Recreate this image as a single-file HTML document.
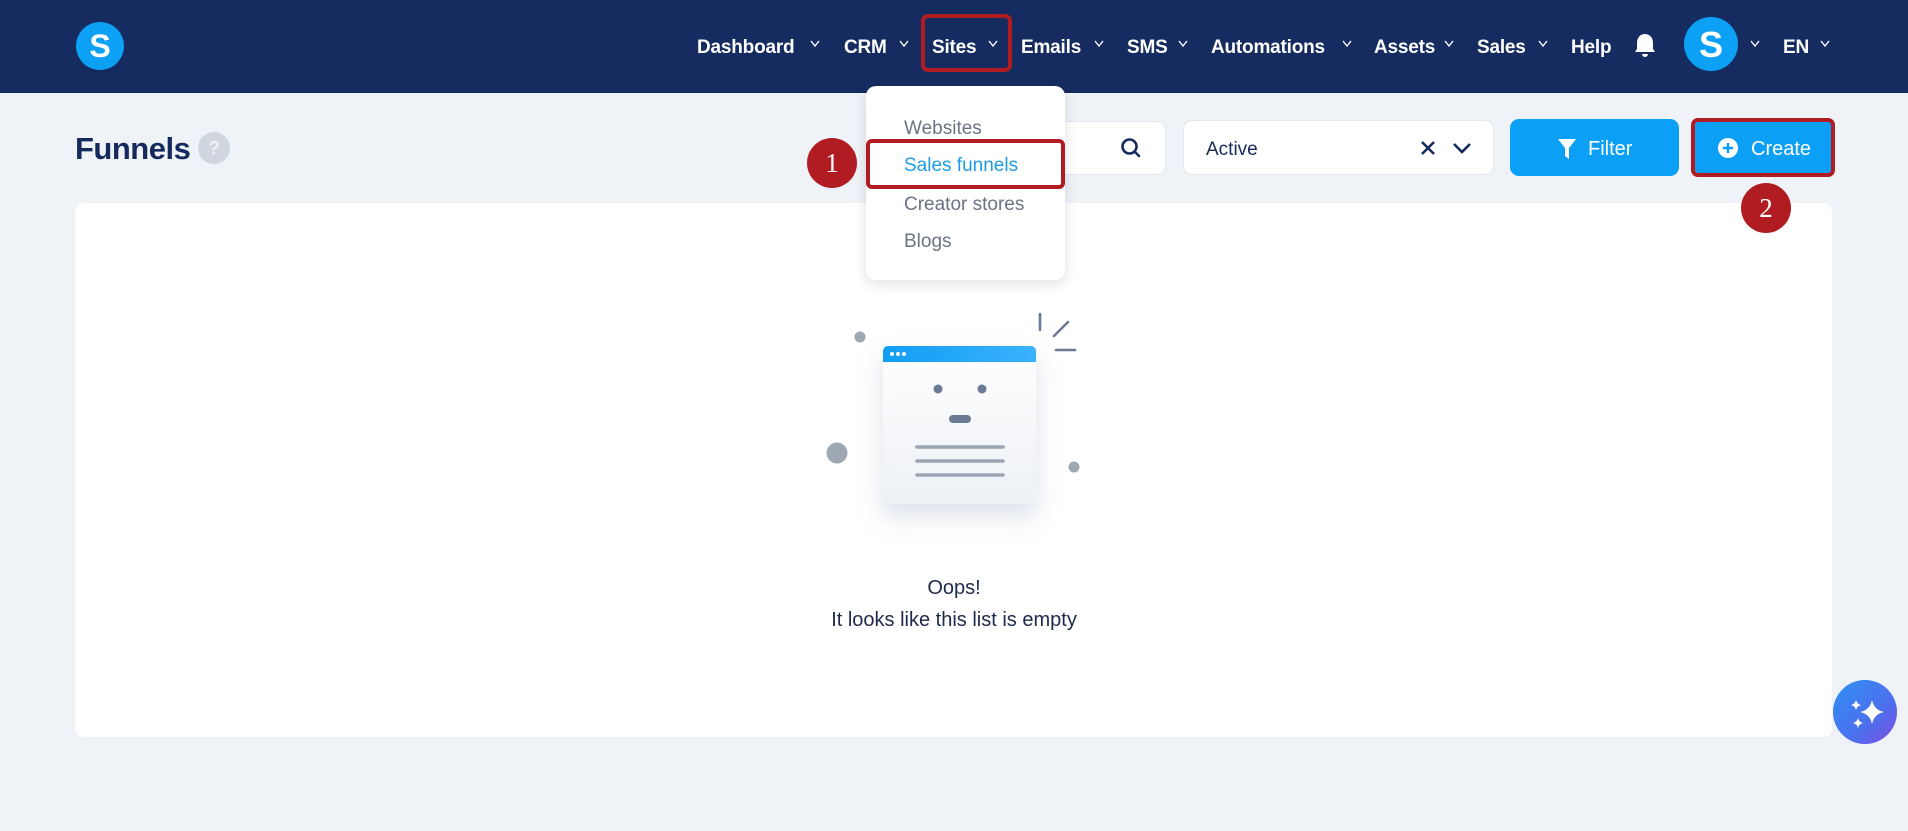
<!DOCTYPE html>
<html><head><meta charset="utf-8"><style>
*{margin:0;padding:0;box-sizing:border-box}
body{width:1908px;height:831px;background:#eff3f8;font-family:"Liberation Sans",sans-serif;position:relative;overflow:hidden}
.nav{position:absolute;left:0;top:0;width:1908px;height:93px;background:#162c60}
.ab{position:absolute}
.ni{position:absolute;top:36px;color:#fff;font-weight:bold;font-size:19px;line-height:24px;letter-spacing:-0.2px}
.dd{position:absolute;left:866px;top:86px;width:199px;height:194px;background:#fff;border-radius:10px;box-shadow:0 4px 14px rgba(0,0,0,.12)}
.di{position:absolute;left:904px;font-size:19px;color:#6b7384;line-height:24px}
.red{border:4px solid #b01c22;border-radius:6px}
.rc{position:absolute;width:50px;height:50px;border-radius:50%;background:#b01c22;color:#fff;font-family:"Liberation Serif",serif;font-size:27px;text-align:center;line-height:50px}
</style></head><body>
<div class="nav"></div>
<svg class="ab" style="left:76px;top:22px" width="48" height="48" viewBox="0 0 48 48"><circle cx="24" cy="24" r="24" fill="#0da1f5"/><text x="24" y="35" font-family="Liberation Sans" font-weight="bold" font-size="32" fill="#fff" text-anchor="middle">S</text></svg>

<div class="ni" style="left:697px">Dashboard</div>
<div class="ni" style="left:844px">CRM</div>
<div class="ab red" style="left:921px;top:14px;width:91px;height:58px;border-radius:7px"></div>
<div class="ni" style="left:932px">Sites</div>
<div class="ni" style="left:1021px">Emails</div>
<div class="ni" style="left:1127px">SMS</div>
<div class="ni" style="left:1211px">Automations</div>
<div class="ni" style="left:1374px">Assets</div>
<div class="ni" style="left:1477px">Sales</div>
<div class="ni" style="left:1571px">Help</div>
<div class="ni" style="left:1783px">EN</div>
<svg class="ab" style="left:0;top:0" width="1908" height="93">
<g fill="none" stroke="#fff" stroke-width="1.4">
<path d="M811 41l4 5 4-5"/><path d="M900 41l4 5 4-5"/><path d="M989 41l4 5 4-5"/><path d="M1095 41l4 5 4-5"/><path d="M1179 41l4 5 4-5"/><path d="M1343 41l4 5 4-5"/><path d="M1445 41l4 5 4-5"/><path d="M1539 41l4 5 4-5"/><path d="M1751 41l4 5 4-5"/><path d="M1821 41l4 5 4-5"/>
</g>
<path d="M1645 34c-5 0-8 4-8 9v6l-2 3h20l-2-3v-6c0-5-3-9-8-9zM1642 54a3 3 0 0 0 6 0z" fill="#fff"/>
<circle cx="1711" cy="44" r="27" fill="#0da1f5"/>
<text x="1711" y="57" font-family="Liberation Sans" font-weight="bold" font-size="36" fill="#fff" text-anchor="middle">S</text>
</svg>

<div class="ab" style="left:75px;top:131px;font-size:31px;font-weight:bold;color:#152a5c;letter-spacing:-0.5px">Funnels</div>
<div class="ab" style="left:198px;top:132px;width:32px;height:32px;border-radius:50%;background:#cfd6e0;color:#eef1f5;font-weight:bold;font-size:18px;text-align:center;line-height:32px">?</div>

<div class="ab" style="left:1000px;top:121px;width:166px;height:54px;background:#fff;border:1px solid #e3e7ee;border-radius:9px"></div>
<svg class="ab" style="left:1119px;top:136px" width="24" height="24" viewBox="0 0 24 24"><circle cx="10.5" cy="10.5" r="7" fill="none" stroke="#152a5c" stroke-width="2.6"/><path d="M15.5 15.5l4.5 4.5" stroke="#152a5c" stroke-width="2.6" stroke-linecap="round"/></svg>

<div class="ab" style="left:1183px;top:120px;width:311px;height:55px;background:#fff;border:1px solid #e3e7ee;border-radius:9px"></div>
<div class="ab" style="left:1206px;top:139px;font-size:19px;color:#152a5c">Active</div>
<svg class="ab" style="left:1418px;top:136px" width="60" height="24"><path d="M4 6l12 12M16 6l-12 12" stroke="#152a5c" stroke-width="2.6"/><path d="M36 8l8 8 8-8" fill="none" stroke="#152a5c" stroke-width="2.6"/></svg>

<div class="ab" style="left:1510px;top:119px;width:169px;height:57px;background:#0ba0f5;border-radius:9px"></div>
<svg class="ab" style="left:1557px;top:138px" width="20" height="22"><path d="M1 1h18l-7 9v11l-4-3v-8z" fill="#fff"/></svg>
<div class="ab" style="left:1588px;top:138px;font-size:20px;color:#fff">Filter</div>

<div class="ab" style="left:1695px;top:119px;width:137px;height:57px;background:#0ba0f5;border-radius:7px"></div>
<div class="ab red" style="left:1691px;top:118px;width:144px;height:59px;border-radius:7px"></div>
<svg class="ab" style="left:1717px;top:137px" width="22" height="22"><circle cx="11" cy="11" r="10" fill="#fff"/><path d="M11 6v10M6 11h10" stroke="#0ba0f5" stroke-width="2.4"/></svg>
<div class="ab" style="left:1751px;top:138px;font-size:20px;color:#fff">Create</div>

<div class="ab" style="left:75px;top:203px;width:1757px;height:534px;background:#fff;border-radius:9px"></div>

<div class="dd"></div>
<div class="di" style="left:904px;top:117px">Websites</div>
<div class="ab red" style="left:866px;top:139px;width:199px;height:50px"></div>
<div class="di" style="top:154px;color:#1f9be6">Sales funnels</div>
<div class="di" style="top:193px">Creator stores</div>
<div class="di" style="top:230px">Blogs</div>
<div class="rc" style="left:807px;top:138px">1</div>
<div class="rc" style="left:1741px;top:183px">2</div>

<svg class="ab" style="left:0;top:0" width="1908" height="831">
<defs><linearGradient id="bar" x1="0" x2="1"><stop offset="0" stop-color="#119ef5"/><stop offset="1" stop-color="#3bb2fb"/></linearGradient>
<linearGradient id="win" x1="0" y1="0" x2="0" y2="1"><stop offset="0" stop-color="#fff"/><stop offset="1" stop-color="#edf0f5"/></linearGradient>
<linearGradient id="ai" x1="0" y1="0" x2="1" y2="1"><stop offset="0" stop-color="#2f8ff6"/><stop offset=".6" stop-color="#4c70ee"/><stop offset="1" stop-color="#7a4fe0"/></linearGradient>
<filter id="sh" x="-50%" y="-50%" width="200%" height="200%"><feDropShadow dx="0" dy="12" stdDeviation="12" flood-color="#8a9ab5" flood-opacity=".3"/></filter></defs>
<rect x="883" y="346" width="153" height="158" rx="5" fill="url(#win)" filter="url(#sh)"/>
<path d="M888 346h143a5 5 0 0 1 5 5v11h-153v-11a5 5 0 0 1 5-5z" fill="url(#bar)"/>
<circle cx="892" cy="354" r="2" fill="#fff"/><circle cx="898" cy="354" r="2" fill="#fff"/><circle cx="904" cy="354" r="2" fill="#fff"/>
<circle cx="938" cy="389" r="4.5" fill="#6c7a93"/><circle cx="982" cy="389" r="4.5" fill="#6c7a93"/>
<rect x="949" y="415" width="22" height="8" rx="4" fill="#6c7a93"/>
<g stroke="#9aa6b5" stroke-width="3.5" stroke-linecap="round"><path d="M917 447h86M917 461h86M917 475h86"/></g>
<circle cx="860" cy="337" r="5.5" fill="#9ea8b3"/><circle cx="837" cy="453" r="10.5" fill="#9ea8b3"/><circle cx="1074" cy="467" r="5.5" fill="#9ea8b3"/>
<g stroke="#6c7a93" stroke-width="2.6" stroke-linecap="round"><path d="M1040 314v16M1054 336l14-14M1056 350h19"/></g>
<circle cx="1865" cy="712" r="32" fill="url(#ai)"/>
<path d="M1872 700q2 10 12 12q-10 2-12 12q-2-10-12-12q10-2 12-12z" fill="#fff"/>
<path d="M1856 700q1 4 5 5q-4 1-5 5q-1-4-5-5q4-1 5-5z" fill="#fff"/>
<path d="M1858 718q1 4 5 5q-4 1-5 5q-1-4-5-5q4-1 5-5z" fill="#fff"/>
</svg>

<div class="ab" style="left:754px;width:400px;top:572px;text-align:center;font-size:20px;color:#1e2a4a;line-height:32px">Oops!<br>It looks like this list is empty</div>
</body></html>
